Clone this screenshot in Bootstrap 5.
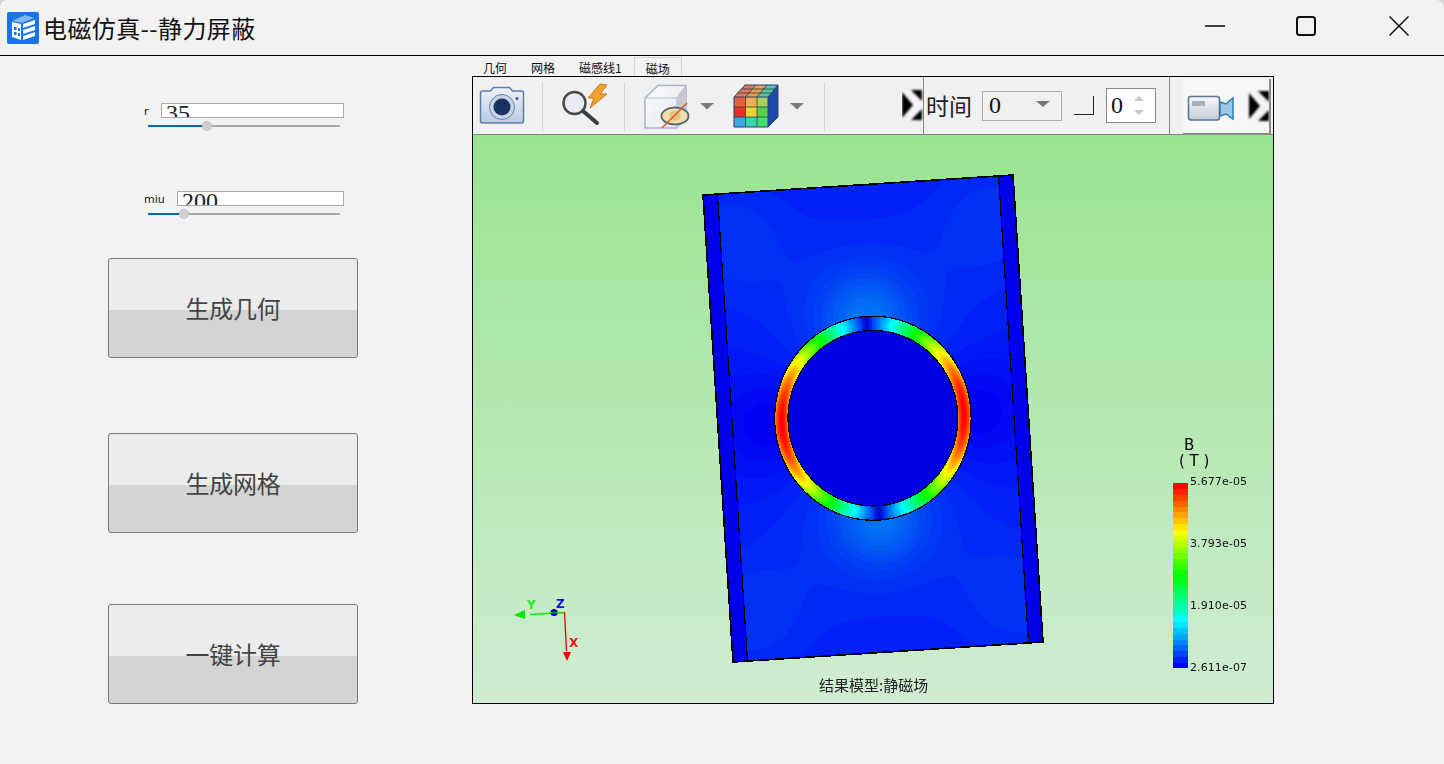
<!DOCTYPE html>
<html lang="zh-CN">

<head>
    <meta charset="UTF-8">
    <meta name="viewport" content="width=device-width, initial-scale=1.0">
    <title>电磁仿真--静力屏蔽</title>
    <link href="https://cdn.jsdelivr.net/npm/bootstrap@5.3.0/dist/css/bootstrap.min.css" rel="stylesheet">
    <style>
        html, body { height: 100%; overflow: hidden; }
        body { background: #d4d4d4; font-family: "Noto Sans CJK SC", "Liberation Sans", sans-serif; color: #111; }
        .app-window { height: 764px; background: #f2f2f2; border-radius: 8px 8px 0 0; }

        /* title bar */
        .title-bar { height: 56px; border-bottom: 1px solid #000; padding-left: 7px; }
        .title-text { font-size: 24px; line-height: 32px; margin-left: 4px; letter-spacing: .4px; color: #111; }
        .win-ctl { position: absolute; top: 0; left: 0; }

        /* left panel */
        .side-panel { width: 472px; flex: none; }
        .param-block { margin-left: 144px; width: 200px; }
        .param-name { height: 15px; font: 11px/17px "DejaVu Sans", sans-serif; color: #111; }
        .param-r { width: 17px; }
        .param-miu { width: 33px; }
        .param-box { height: 15px; flex: 1; background: #fff; border: 1px solid #aaa; overflow: hidden;
            font: 24px/18px "Liberation Serif", serif; padding-left: 4px; color: #222; }
        .param-range { display: block; width: 192px; height: 16px; margin-left: 4px; padding: 0; }
        .param-range::-webkit-slider-runnable-track { height: 2px; background: linear-gradient(to right, #0a62b5 var(--fill), #aaa var(--fill)); border-radius: 0; }
        .param-range::-webkit-slider-thumb { width: 10px; height: 10px; margin-top: -4px; background: #cfcfcf; border: 1px dotted #b5b5b5; border-radius: 50%; box-shadow: none; }
        .param-gap { margin-top: 57px; }
        .param-top { margin-top: 47px; }
        .sim-btn { display: block; width: 250px; height: 100px; margin-left: 108px; padding: 0; border: 1px solid #7a7a7a; border-radius: 3px;
            background: linear-gradient(to bottom, #ececec 0, #ececec 52%, #d4d4d4 52%, #d4d4d4 100%);
            font-size: 24px; line-height: 96px; letter-spacing: -.3px; color: #444; }
        .sim-btn:hover { background: linear-gradient(to bottom, #ececec 0, #ececec 52%, #d4d4d4 52%, #d4d4d4 100%); border-color: #7a7a7a; color: #444; }
        .btn-a { margin-top: 36px; }
        .btn-b { margin-top: 75px; }
        .btn-c { margin-top: 71px; }

        /* tabs and viewer */
        .view-panel { width: 802px; flex: none; }
        .tab-row { height: 20px; font-size: 12px; line-height: 24px; color: #111; }
        .tab-item { padding: 0 12px; white-space: nowrap; }
        .tab-item:first-child { padding-left: 11px; }
        .tab-on { padding: 0 11px; margin: 1px 0 -1px 0; background: #f2f2f2; border: 1px solid #d8d8d8; border-bottom: 0; line-height: 22px; position: relative; z-index: 1; }
        .view-frame { width: 802px; height: 628px; background: #f0f0f0; border: 1px solid #000; position: relative; z-index: 2; }
        .tool-bar { height: 58px; border-bottom: 1px solid #808080; }
        .tool-bar svg { display: block; flex: none; }
        .tool-soft { filter: blur(.35px); }
        .tool-line { width: 1px; height: 57px; background: #8a8a8a; flex: none; }
        .tool-line-end { margin-left: auto; margin-right: 13px; }
        .time-label { font-size: 23px; line-height: 57px; width: 56px; margin-left: 2px; letter-spacing: 0; color: #222; }
        .time-combo { width: 80px; height: 30px; margin-top: 14px; border: 1px solid #aaa; padding-left: 6px; font: 24px/27px "Liberation Serif", serif; color: #111; position: relative; }
        .combo-arrow { position: absolute; right: 11px; top: 9px; width: 0; height: 0; border: 7px solid transparent; border-top: 6px solid #777; border-bottom: 0; }
        .time-corner { width: 20px; height: 19px; margin: 19px 12px 0 12px; border-right: 1px solid #222; border-bottom: 1px solid #222; }
        .time-spin { width: 50px; height: 35px; margin-top: 11px; background: #fff; border: 1px solid #888; padding-left: 4px; font: 24px/32px "Liberation Serif", serif; color: #111; }
        .spin-arrows { width: 14px; margin: 7px 9px 0 auto; }
        .spin-up, .spin-down { width: 0; height: 0; border: 5px solid transparent; margin: 0 auto; }
        .spin-up { border-top: 0; border-bottom: 5px solid #c8c8c8; margin-bottom: 9px; }
        .spin-down { border-bottom: 0; border-top: 5px solid #c8c8c8; }
        .rec-part { width: 88px; height: 56px; margin: 2px 2px 0 0; background: #f6f6f6; border-right: 2px solid #8a8a8a; border-bottom: 2px solid #8a8a8a; flex: none; }
        .field-view { width: 800px; height: 568px; background: linear-gradient(to bottom, #99e491, #d0ecd2); position: relative; }
        .field-view canvas { display: block; image-rendering: pixelated; }
        .field-over { position: absolute; top: 0; left: 0; }
        .lg-val { font: 11px "DejaVu Sans", sans-serif; fill: #111; }
        .lg-head { font: 15px "DejaVu Sans", sans-serif; fill: #000; }
        .cap-text { font: 15px "Noto Sans CJK SC", sans-serif; fill: #222; }
        .ax-text { font: bold 12px "DejaVu Sans", sans-serif; }
    </style>
</head>

<body>
    <div class="app-window d-flex flex-column">

        <!-- Title bar -->
        <div class="title-bar d-flex align-items-center position-relative">
            <svg width="32" height="32" viewBox="0 0 32 32">
                <rect width="32" height="32" rx="2" fill="#1a74e8"/>
                <path d="M5 9 L18 3 L27 6 L15 11 Z" fill="#7fb4f5"/>
                <path d="M5 10 L14 12 L14 28 L5 25 Z" fill="#fff"/>
                <path d="M16 12 L28 8 L28 12 L16 16 Z M16 18 L28 14 L28 18 L16 22 Z M16 24 L28 20 L28 24 L16 28 Z" fill="#fff"/>
                <path d="M7 15 h2.500 v3 h-2.500 Z M11 16 h2 v3 h-2 Z M7 20 h2.500 v3 h-2.500 Z M11 21 h2 v3 h-2 Z" fill="#1a74e8"/>
            </svg>
            <span class="title-text">电磁仿真--静力屏蔽</span>
            <svg class="win-ctl" width="1444" height="55" viewBox="0 0 1444 55" fill="none" stroke="#111">
                <path d="M1205 26 H1225" stroke-width="1.600"/>
                <rect x="1297" y="17" width="18" height="18" rx="2.500" stroke-width="2"/>
                <path d="M1389.500 16.500 L1408.500 35.500 M1408.500 16.500 L1389.500 35.500" stroke-width="1.500"/>
            </svg>
        </div>

        <div class="d-flex flex-grow-1">

            <!-- Parameters and actions -->
            <div class="side-panel">
                <div class="param-block param-top">
                    <div class="d-flex">
                        <span class="param-name param-r">r</span>
                        <div class="param-box">35</div>
                    </div>
                    <input type="range" class="form-range param-range" min="0" max="1000" value="297" style="--fill: 30%">
                </div>
                <div class="param-block param-gap">
                    <div class="d-flex">
                        <span class="param-name param-miu">miu</span>
                        <div class="param-box">200</div>
                    </div>
                    <input type="range" class="form-range param-range" min="0" max="1000" value="170" style="--fill: 18%">
                </div>
                <button type="button" class="btn sim-btn btn-a">生成几何</button>
                <button type="button" class="btn sim-btn btn-b">生成网格</button>
                <button type="button" class="btn sim-btn btn-c">一键计算</button>
            </div>

            <!-- Result viewer -->
            <div class="view-panel">
                <div class="tab-row d-flex">
                    <div class="tab-item">几何</div>
                    <div class="tab-item">网格</div>
                    <div class="tab-item">磁感线1</div>
                    <div class="tab-item tab-on">磁场</div>
                </div>
                <div class="view-frame">
                    <div class="tool-bar d-flex">
                        <svg class="tool-soft" width="429" height="57" viewBox="473 77 429 57">
                            <defs>
                                <linearGradient id="camBody" x1="0" y1="0" x2="0" y2="1">
                                    <stop offset="0" stop-color="#eef2f8"/>
                                    <stop offset="1" stop-color="#b8cbe2"/>
                                </linearGradient>
                                <linearGradient id="cubeFace" x1="0" y1="0" x2="1" y2="1">
                                    <stop offset="0" stop-color="#fdfdfd"/>
                                    <stop offset="1" stop-color="#dfe3ea"/>
                                </linearGradient>
                            </defs>
                            <!-- camera -->
                            <path d="M480.500 93 q0-2 2-2 h8 l3-3.500 h16 l3 3.500 h9 q2 0 2 2 v28 q0 2-2 2 h-39 q-2 0-2-2 Z" fill="url(#camBody)" stroke="#5d7ea6" stroke-width="1.500"/>
                            <circle cx="502" cy="107" r="12.500" fill="#c7d3e6" stroke="#6b83a3" stroke-width="1"/>
                            <circle cx="502" cy="107" r="8.500" fill="#1b3163"/>
                            <circle cx="517" cy="98.500" r="1.500" fill="#3b5684"/>
                            <path d="M542.500 82 V131" stroke="#d4d4d4"/>
                            <!-- search with lightning -->
                            <circle cx="574.500" cy="103" r="11" fill="#e9ecf2" stroke="#4a4a4a" stroke-width="2.500"/>
                            <path d="M583 111 L597 123" stroke="#3a3f46" stroke-width="4" stroke-linecap="round"/>
                            <path d="M600 84 L588 98 L594 98 L590 108 L607 94 L600 94 L607 85 Z" fill="#f0a42a" stroke="#c9771c" stroke-width="1"/>
                            <path d="M624.500 82 V131" stroke="#d4d4d4"/>
                            <!-- hidden cube -->
                            <path d="M645 98 L658 85.500 H686 V115 L677 128 H645 Z" fill="url(#cubeFace)" stroke="#aab2bf" stroke-width="1.500"/>
                            <path d="M645 98 H677 L686 85.500 M677 98 V128" fill="none" stroke="#b4bac5" stroke-width="1.200"/>
                            <path d="M677 98 L686 85.500 V115 L677 128 Z" fill="#c6cad2"/>
                            <ellipse cx="675" cy="116" rx="13.500" ry="8.500" fill="#f2dfa6" stroke="#53657e" stroke-width="1.800"/>
                            <ellipse cx="675" cy="116" rx="5.500" ry="5" fill="#e3c27b"/>
                            <path d="M662 128 L687 103" stroke="#d8552a" stroke-width="1.500"/>
                            <path d="M700 103 H714 L707 109.500 Z" fill="#7a7a7a"/>
                            <!-- result cube -->
                            <path d="M734 97 L745 85 H778 L768 97 Z" fill="#e6a04c"/>
                            <path d="M745 85 H756 L745 97 H734 Z" fill="#e5765a"/>
                            <path d="M767 85 H778 L768 97 H757 Z" fill="#58c6a0"/>
                            <path d="M768 97 L778 85 V117 L768 127 Z" fill="#1d4aa8"/>
                            <path d="M734 97 h11.500 v10 h-11.500 Z" fill="#e2603f"/>
                            <path d="M745.500 97 h11.500 v10 h-11.500 Z" fill="#eeb04c"/>
                            <path d="M757 97 h11 v10 h-11 Z" fill="#a6d05a"/>
                            <path d="M734 107 h11.500 v10 h-11.500 Z" fill="#e5321f"/>
                            <path d="M745.500 107 h11.500 v10 h-11.500 Z" fill="#f2d22c"/>
                            <path d="M757 107 h11 v10 h-11 Z" fill="#55d24a"/>
                            <path d="M734 117 h11.500 v10 h-11.500 Z" fill="#3ea7e0"/>
                            <path d="M745.500 117 h11.500 v10 h-11.500 Z" fill="#38d6a8"/>
                            <path d="M757 117 h11 v10 h-11 Z" fill="#45e070"/>
                            <path d="M745.500 97 V127 M757 97 V127 M734 107 H768 M734 117 H768 M745.500 97 L756 85 M757 97 L767 85 M738 93 H771 M741.500 89 H775" stroke="#2d3a4c" stroke-width=".8" fill="none"/>
                            <path d="M734 97 H768 V127 H734 Z M734 97 L745 85 H778 V117 L768 127 M768 97 L778 85" fill="none" stroke="#27406e" stroke-width="1"/>
                            <path d="M790 103 H804 L797 109.500 Z" fill="#7a7a7a"/>
                            <path d="M824.500 82 V131" stroke="#d4d4d4"/>
                        </svg>
                        <svg width="21" height="57" viewBox="0 0 21 57">
                            <defs>
                                <filter id="softEdge"><feGaussianBlur stdDeviation="1"/></filter>
                            </defs>
                            <rect x="0" y="13" width="20" height="30" fill="#f4f4f4"/>
                            <g filter="url(#softEdge)">
                                <path d="M0 15 L11 28 L0 41 Z M9 13 H20 V24 Z M9 43 H20 V32 Z" fill="#000"/>
                            </g>
                        </svg>
                        <div class="tool-line"></div>
                        <div class="time-label">时间</div>
                        <div class="time-combo">0<span class="combo-arrow"></span></div>
                        <div class="time-corner"></div>
                        <div class="time-spin d-flex">0
                            <div class="spin-arrows">
                                <div class="spin-up"></div>
                                <div class="spin-down"></div>
                            </div>
                        </div>
                        <div class="tool-line tool-line-end"></div>
                        <div class="rec-part">
                            <svg width="86" height="54" viewBox="1183 79 86 54">
                                <defs>
                                    <linearGradient id="recBody" x1="0" y1="0" x2="0" y2="1">
                                        <stop offset="0" stop-color="#f8f9fb"/>
                                        <stop offset="1" stop-color="#c4cad6"/>
                                    </linearGradient>
                                </defs>
                                <rect x="1188.500" y="96.500" width="31" height="23.500" rx="2.500" fill="url(#recBody)" stroke="#5f7596" stroke-width="1.600"/>
                                <rect x="1192" y="101" width="13" height="5" fill="#a9aeb8"/>
                                <path d="M1220 102 L1226 104 L1233 98 V119 L1226 114 L1220 116 Z" fill="#9cc8e4" stroke="#2e7fb4" stroke-width="1.500"/>
                                <rect x="1249" y="91" width="20" height="30" fill="#f4f4f4"/>
                                <g filter="url(#softEdge)">
                                    <path d="M1249 93 L1260 106 L1249 119 Z M1258 91 H1269 V102 Z M1258 121 H1269 V110 Z" fill="#000"/>
                                </g>
                            </svg>
                        </div>
                    </div>
                    <div class="field-view">
                        <canvas id="fieldCanvas" width="800" height="568"></canvas>
                        <svg class="field-over" width="800" height="568" viewBox="473 135 800 568">
                            <!-- legend -->
                            <text class="lg-head" x="1184" y="450">B</text>
                            <text class="lg-head" x="1179" y="466" xml:space="preserve">( T )</text>
                            <text class="lg-val" x="1190" y="485" textLength="57">5.677e-05</text>
                            <text class="lg-val" x="1190" y="547" textLength="57">3.793e-05</text>
                            <text class="lg-val" x="1190" y="609" textLength="57">1.910e-05</text>
                            <text class="lg-val" x="1190" y="671" textLength="57">2.611e-07</text>
                            <!-- axes triad -->
                            <path d="M564 612.500 L530 614.500" stroke="#00f000" stroke-width="1.300" fill="none"/>
                            <path d="M525 610 L514 615 L525 619 Z" fill="#00e800"/>
                            <circle cx="554" cy="612.500" r="3.500" fill="#0000c8"/>
                            <path d="M549 612.800 H564" stroke="#00f000" stroke-width="1"/>
                            <path d="M564.500 612 L566.500 651" stroke="#f00000" stroke-width="1.300" fill="none"/>
                            <path d="M563 652 H571 L567 661 Z" fill="#f00000"/>
                            <text class="ax-text" x="527" y="609" fill="#22ee22">Y</text>
                            <text class="ax-text" x="556" y="608" fill="#1010e0">Z</text>
                            <text class="ax-text" x="569" y="647" fill="#f01010">X</text>
                            <!-- caption -->
                            <text class="cap-text" x="819" y="691">结果模型:静磁场</text>
                        </svg>
                    </div>
                </div>
            </div>
        </div>
    </div>

    <script src="https://cdn.jsdelivr.net/npm/bootstrap@5.3.0/dist/js/bootstrap.bundle.min.js"></script>
    <script>
        const canvas = document.getElementById("fieldCanvas");
        const ctx = canvas.getContext("2d");
        const img = ctx.createImageData(canvas.width, canvas.height);
        const OX = 473, OY = 135;

        // Plate corners on the page
        const TL = [703, 195], E1 = [310, -20], E2 = [30, 467];
        const det = E1[0] * E2[1] - E1[1] * E2[0];
        const L1 = Math.hypot(E1[0], E1[1]), L2 = Math.hypot(E2[0], E2[1]);
        const STRIP = 14.5;
        const CX = 872.9, CY = 418.2;
        const TILT = Math.atan2(30, 467);

        // Blue-cyan-green-yellow-red ramp of the legend
        const jet = (v) => {
            v = Math.max(0, Math.min(1, v));
            const seg = v * 4, i = Math.min(3, Math.floor(seg)), f = seg - i;
            if (i === 0) return [0, 255 * f, 255];
            if (i === 1) return [0, 255, 255 * (1 - f)];
            if (i === 2) return [255 * f, 255, 0];
            return [255, 255 * (1 - f), 0];
        };

        const put = (x, y, c) => {
            const p = (y * canvas.width + x) * 4;
            img.data[p] = c[0]; img.data[p + 1] = c[1]; img.data[p + 2] = c[2]; img.data[p + 3] = 255;
        };

        const BLACK = [0, 0, 0];
        const shade = (c, k) => [c[0] * k, c[1] * k, c[2] * k];
        const bump = (a, b, s) => Math.exp(-(a * a + b * b) / (2 * s * s));

        for (let y = 0; y < canvas.height; y++) {
            for (let x = 0; x < canvas.width; x++) {
                const px = x + OX + .5, py = y + OY + .5;
                const dx = px - TL[0], dy = py - TL[1];
                const s = (dx * E2[1] - dy * E2[0]) / det;
                const t = (E1[0] * dy - E1[1] * dx) / det;
                const sp = s * L1, tp = t * L2;
                const inside = s >= 0 && s <= 1 && t >= 0 && t <= 1;
                const near = s > -.01 && s < 1.01 && t > -.01 && t < 1.01;
                if (!near) continue;

                const onEdge = (Math.abs(sp) < .8 || Math.abs(sp - L1) < .8) && t > -.002 && t < 1.002
                    || (Math.abs(tp) < .8 || Math.abs(tp - L2) < .8) && s > -.002 && s < 1.002
                    || inside && (Math.abs(sp - STRIP) < .6 || Math.abs(sp - L1 + STRIP) < .6);
                if (onEdge) { put(x, y, BLACK); continue; }
                if (!inside) continue;

                const cx = px - CX, cy = py - CY;
                const fo = Math.hypot(cx / 98.2, cy / 102), fi = Math.hypot(cx / 84.9, cy / 87.7);
                if (Math.abs(fo - 1) * 100 < .6 || Math.abs(fi - 1) * 86 < .6) { put(x, y, BLACK); continue; }

                const u = cx * Math.cos(TILT) - cy * Math.sin(TILT);
                const w = cx * Math.sin(TILT) + cy * Math.cos(TILT);
                const r = Math.hypot(u, w);
                const sinA = u / r;

                if (fi < 1) { put(x, y, [0, 0, 224]); continue; }
                if (fo < 1) {
                    // Strongest mid-wall at the sides, falling off slightly at both faces
                    const q = (fi - 1) / (fi - fo);
                    const v = Math.abs(sinA) * (1 - .15 * Math.pow(2 * q - 1, 2));
                    const c = jet(v);
                    put(x, y, v < .05 ? shade(c, .86) : c);
                    continue;
                }
                if (sp < STRIP || sp > L1 - STRIP) {
                    const d = sp < STRIP ? sp / STRIP : (L1 - sp) / STRIP;
                    put(x, y, [0, 0, 222 + 26 * d]);
                    continue;
                }

                // Surrounding plate: round glow at the poles, dark at the sides, light near the corners
                const au = Math.abs(u), aw = Math.abs(w);
                let v = .03
                    + .065 * bump(u, aw - 100, 30)
                    + .03 * bump(u, aw - 100, 70)
                    - .032 * bump(au - 100, w, 38)
                    + .025 * bump(au - 135, aw - 190, 45);
                v = Math.max(0, Math.floor(v * 120) / 120);
                put(x, y, shade(jet(v), .96));
            }
        }

        // Colour bar, 32 bands
        for (let y = 483; y < 668; y++) {
            const v = Math.floor((668 - y) / 185 * 32) / 31;
            const c = jet(v);
            for (let x = 1173; x < 1188; x++) put(x - OX, y - OY, c);
        }

        ctx.putImageData(img, 0, 0);
    </script>
</body>

</html>
